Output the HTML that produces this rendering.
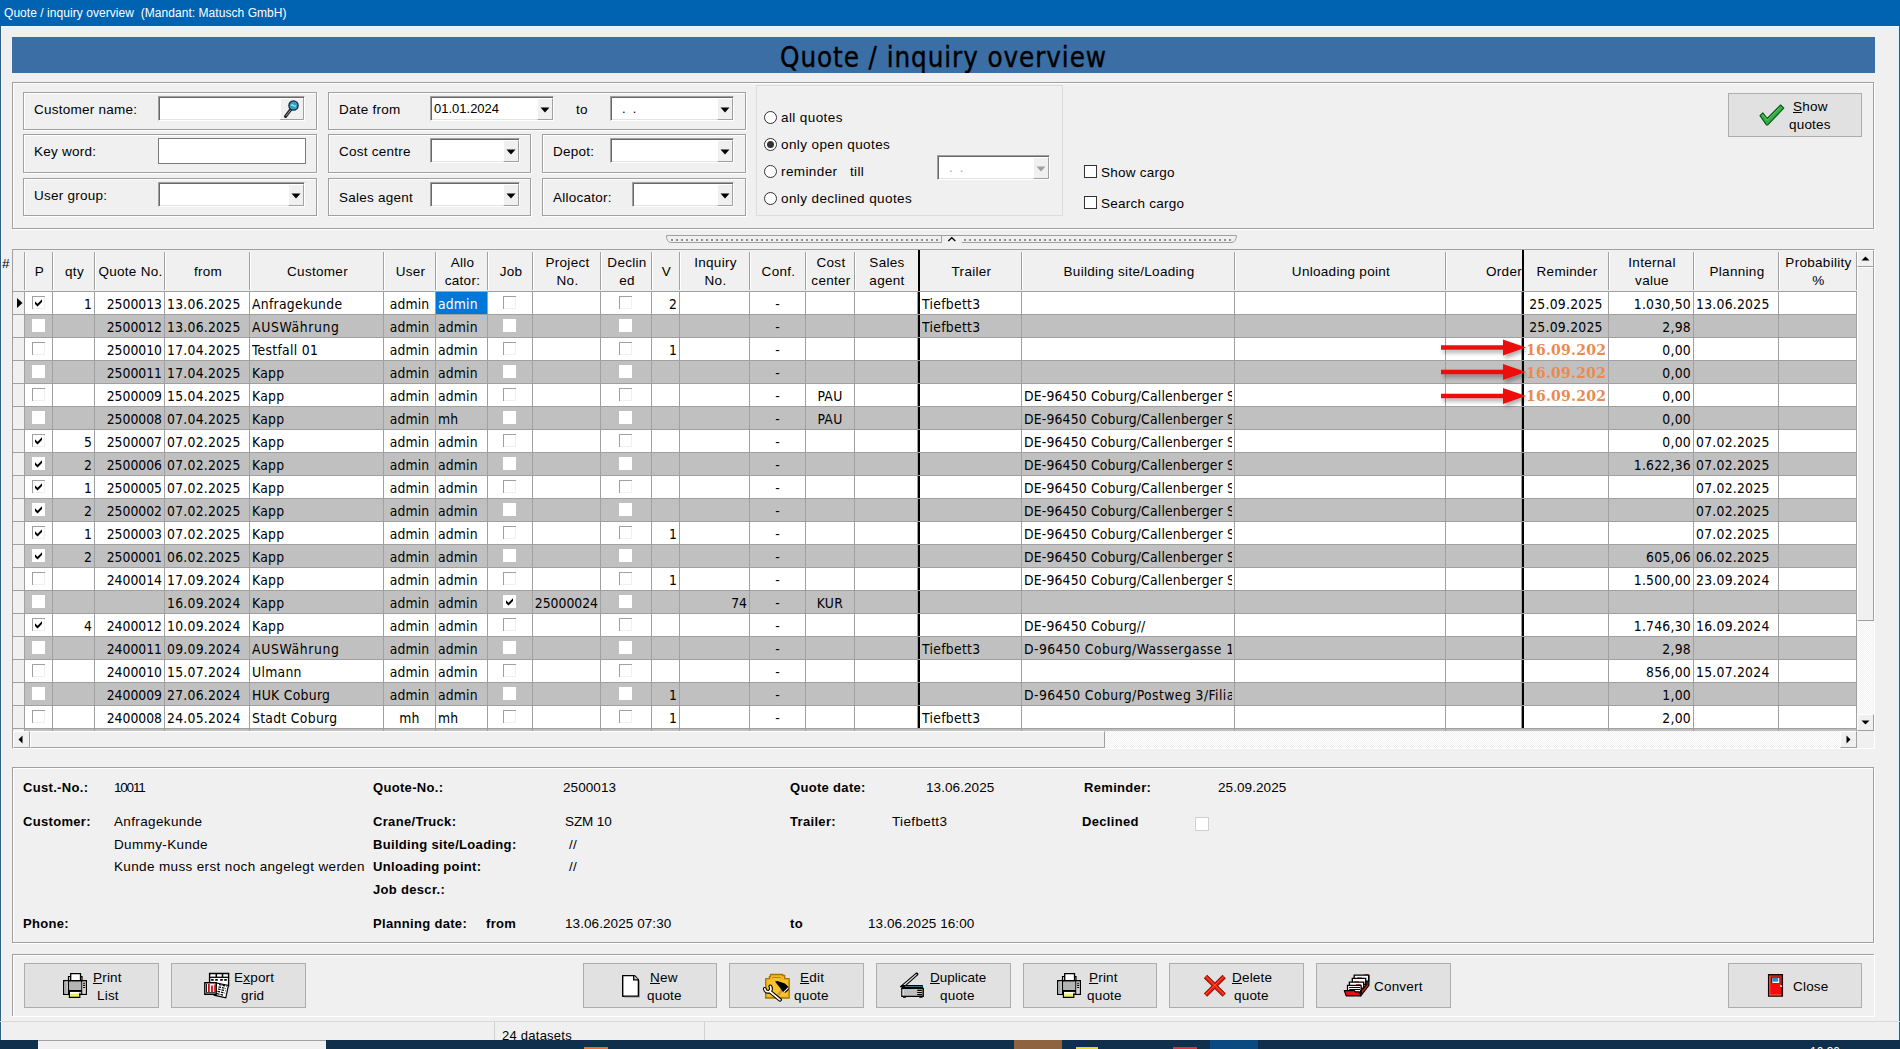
<!DOCTYPE html>
<html lang="en"><head><meta charset="utf-8"><title>Quote / inquiry overview</title>
<style>
html,body{margin:0;padding:0}
body{width:1900px;height:1049px;overflow:hidden;background:#f0f0f0;position:relative;font-family:"Liberation Sans",sans-serif;color:#000}
div,span,svg.a{position:absolute;box-sizing:content-box}
.t{white-space:pre;line-height:20px}
.lbl{font-size:13.5px;letter-spacing:.25px}
.b{font-size:13px;font-weight:bold;letter-spacing:.32px}
.val{font-size:13.5px;letter-spacing:.36px}
.hd{font-size:13.5px;letter-spacing:.3px;padding-left:1px}
.dt{font-family:"DejaVu Sans Condensed","Liberation Sans",sans-serif;font-size:13.8px;letter-spacing:.15px}
.btn{font-size:13.5px;letter-spacing:.2px}
.ttl{font-size:12px;color:#fff}
.big{font-family:"DejaVu Sans Condensed","Liberation Sans",sans-serif;font-size:27.5px;letter-spacing:.92px;-webkit-text-stroke:.35px #000}
.st{font-size:13px;letter-spacing:.25px}
.or{font-family:"DejaVu Serif","Liberation Serif",serif;font-weight:bold;font-size:14px;color:#ec8a4e;letter-spacing:.25px}
.et{border:1px solid #a0a0a0;box-shadow:inset 1px 1px 0 #fff,1px 1px 0 #fff}
.sk{border:1px solid;border-color:#a0a0a0 #fff #fff #a0a0a0;box-shadow:inset 1px 1px 0 #696969,inset -1px -1px 0 #e3e3e3;padding:1px}
.cb{background:#f0f0f0;border:1px solid;border-color:#fff #a0a0a0 #a0a0a0 #fff;box-shadow:none}
.pb{background:#e1e1e1;border:1px solid #adadad}
u{text-decoration:underline;text-underline-offset:1px}
</style></head><body>

<div style="left:0px;top:0px;width:1900px;height:26px;background:#0063b1"></div>
<span class="t ttl" style="left:4px;top:3px;letter-spacing:.05px;">Quote / inquiry overview  (Mandant: Matusch GmbH)</span>
<div style="left:0px;top:26px;width:1px;height:1014px;background:#2f5f80"></div>
<div style="left:1px;top:26px;width:1px;height:1014px;background:#e6fbff"></div>
<div style="left:1px;top:26px;width:1897px;height:1px;background:#e6fbff"></div>
<div style="left:1898px;top:26px;width:1px;height:1014px;background:#dff6ff"></div>
<div style="left:1899px;top:26px;width:1px;height:1014px;background:#2b5a80"></div>
<div style="left:12px;top:37px;width:1863px;height:36px;background:#3a6ea5;overflow:hidden"><span class="t big" style="left:0;width:1863px;text-align:center;top:10px">Quote / inquiry overview</span></div>
<div class="et" style="left:12px;top:82px;width:1860px;height:145px;"></div>
<div class="et" style="left:23px;top:92px;width:292px;height:36px;"></div>
<div class="et" style="left:23px;top:134px;width:292px;height:37px;"></div>
<div class="et" style="left:23px;top:178px;width:292px;height:36px;"></div>
<div class="et" style="left:328px;top:92px;width:416px;height:36px;"></div>
<div class="et" style="left:328px;top:134px;width:201px;height:37px;"></div>
<div class="et" style="left:328px;top:178px;width:201px;height:36px;"></div>
<div class="et" style="left:542px;top:134px;width:202px;height:37px;"></div>
<div class="et" style="left:542px;top:178px;width:202px;height:36px;"></div>
<span class="t lbl" style="left:34px;top:100px;">Customer name:</span>
<span class="t lbl" style="left:34px;top:142px;">Key word:</span>
<span class="t lbl" style="left:34px;top:186px;">User group:</span>
<span class="t lbl" style="left:339px;top:100px;">Date from</span>
<span class="t lbl" style="left:339px;top:142px;">Cost centre</span>
<span class="t lbl" style="left:339px;top:188px;">Sales agent</span>
<span class="t lbl" style="left:576px;top:100px;">to</span>
<span class="t lbl" style="left:553px;top:142px;">Depot:</span>
<span class="t lbl" style="left:553px;top:188px;">Allocator:</span>
<div class="sk" style="left:158px;top:96px;width:143px;height:21px;background:#fff;"><svg class="a" width="24" height="22" style="right:0;top:1px" viewBox="0 0 24 22"><rect x="0.5" y="0.5" width="23" height="21" fill="#f0f0f0" stroke="none"/><path d="M0 21.5H23.5V0" fill="none" stroke="#a0a0a0"/><path d="M0.5 21V0.5H23" fill="none" stroke="#fff"/><path d="M5.5 18.5L11.5 10.5" stroke="#222" stroke-width="3" stroke-linecap="round"/><path d="M6 18L11.5 10.8" stroke="#9a9a9a" stroke-width="1"/><circle cx="13.5" cy="7.5" r="4.6" fill="#2fa3c4" stroke="#123" stroke-width="1.3"/><path d="M11 7.5q1.2-1.6 2.5 0t2.5 0" fill="none" stroke="#bfefff" stroke-width="1.1"/></svg></div>
<div style="left:158px;top:138px;width:146px;height:24px;background:#fff;border:1px solid #7a7a7a"></div>
<div class="sk" style="left:158px;top:182px;width:143px;height:21px;background:#fff;"><div class="cb" style="right:0;top:1px;width:14px;height:20px"></div><svg class="a" width="16" height="23" style="right:0;top:0"><path d="M3.5 10.5h9l-4.5 5z" fill="#000"/></svg></div>
<div class="sk" style="left:430px;top:96px;width:120px;height:21px;background:#fff;"><span class="t" style="left:3px;top:1px;font-size:13px;color:#000;line-height:22px">01.01.2024</span><div class="cb" style="right:0;top:1px;width:14px;height:20px"></div><svg class="a" width="16" height="23" style="right:0;top:0"><path d="M3.5 10.5h9l-4.5 5z" fill="#000"/></svg></div>
<div class="sk" style="left:610px;top:96px;width:120px;height:21px;background:#fff;"><span class="t" style="left:11px;top:1px;font-size:13px;color:#000;line-height:22px">.  .</span><div class="cb" style="right:0;top:1px;width:14px;height:20px"></div><svg class="a" width="16" height="23" style="right:0;top:0"><path d="M3.5 10.5h9l-4.5 5z" fill="#000"/></svg></div>
<div class="sk" style="left:430px;top:138px;width:86px;height:21px;background:#fff;"><div class="cb" style="right:0;top:1px;width:14px;height:20px"></div><svg class="a" width="16" height="23" style="right:0;top:0"><path d="M3.5 10.5h9l-4.5 5z" fill="#000"/></svg></div>
<div class="sk" style="left:610px;top:138px;width:120px;height:21px;background:#fff;"><div class="cb" style="right:0;top:1px;width:14px;height:20px"></div><svg class="a" width="16" height="23" style="right:0;top:0"><path d="M3.5 10.5h9l-4.5 5z" fill="#000"/></svg></div>
<div class="sk" style="left:430px;top:182px;width:86px;height:21px;background:#fff;"><div class="cb" style="right:0;top:1px;width:14px;height:20px"></div><svg class="a" width="16" height="23" style="right:0;top:0"><path d="M3.5 10.5h9l-4.5 5z" fill="#000"/></svg></div>
<div class="sk" style="left:632px;top:182px;width:98px;height:21px;background:#fff;"><div class="cb" style="right:0;top:1px;width:14px;height:20px"></div><svg class="a" width="16" height="23" style="right:0;top:0"><path d="M3.5 10.5h9l-4.5 5z" fill="#000"/></svg></div>
<div style="left:756px;top:85px;width:305px;height:129px;border:1px solid #dcdcdc"></div>
<div style="left:764px;top:111px;width:11px;height:11px;border:1px solid #333;border-radius:50%;background:#fff"></div>
<span class="t lbl" style="left:781px;top:108px;letter-spacing:.4px;">all quotes</span>
<div style="left:764px;top:138px;width:11px;height:11px;border:1px solid #333;border-radius:50%;background:#fff"><div style="left:2px;top:2px;width:7px;height:7px;border-radius:50%;background:#333"></div></div>
<span class="t lbl" style="left:781px;top:135px;letter-spacing:.4px;">only open quotes</span>
<div style="left:764px;top:165px;width:11px;height:11px;border:1px solid #333;border-radius:50%;background:#fff"></div>
<span class="t lbl" style="left:781px;top:162px;letter-spacing:.4px;">reminder   till</span>
<div style="left:764px;top:192px;width:11px;height:11px;border:1px solid #333;border-radius:50%;background:#fff"></div>
<span class="t lbl" style="left:781px;top:189px;letter-spacing:.4px;">only declined quotes</span>
<div class="sk" style="left:937px;top:155px;width:109px;height:21px;background:#fff;"><span class="t" style="left:11px;top:1px;font-size:13px;color:#a0a0a0;line-height:22px">.  .</span><div class="cb" style="right:0;top:1px;width:14px;height:20px"></div><svg class="a" width="16" height="23" style="right:0;top:0"><path d="M3.5 10.5h9l-4.5 5z" fill="#a0a0a0"/></svg></div>
<div style="left:1084px;top:165px;width:11px;height:11px;border:1px solid #333;background:#fff"></div>
<span class="t lbl" style="left:1101px;top:163px;">Show cargo</span>
<div style="left:1084px;top:196px;width:11px;height:11px;border:1px solid #333;background:#fff"></div>
<span class="t lbl" style="left:1101px;top:194px;">Search cargo</span>
<div class="pb" style="left:1728px;top:93px;width:132px;height:42px;"></div>
<svg class="a" width="36" height="34" style="left:1754px;top:98px" viewBox="0 0 36 34"><path d="M6 17.600l2.800-2.800l4.400 5.700l13.400-13.500l3.200 3.200l-16 16.700h-1.400z" fill="#35ab46" stroke="#0b5a18" stroke-width="1.100" stroke-linejoin="round"/><path d="M8.600 16.600l4.600 5.600l13.400-13.500" fill="none" stroke="#5fd070" stroke-width=".9"/></svg>
<span class="t btn" style="left:1793px;top:97px;"><u>S</u>how</span>
<span class="t btn" style="left:1789px;top:115px;">quotes</span>
<svg class="a" width="572" height="10" style="left:666px;top:234px" viewBox="0 0 572 10"><path d="M275.5 1.5V8.5H4.5Q0.5 8 0.5 1.5H570.5Q570 8 566 8.5H295.5" fill="none" stroke="#a0a0a0"/><path d="M5 6H273M298 6H567" stroke="#8f8f8f" stroke-width="2" stroke-dasharray="2 3"/><path d="M282.300 7L285.800 3.700L289.300 7" fill="none" stroke="#000" stroke-width="1.300"/></svg>
<div style="left:12px;top:249px;width:1861px;height:498px;border:1px solid;border-color:#a0a0a0 #fff #fff #a0a0a0;background:#f0f0f0"></div>
<span class="t hd" style="left:1px;top:254px;">#</span>
<div style="left:25px;top:292px;width:1831px;height:436px;background:#fff"></div>
<div style="left:25px;top:315px;width:1831px;height:22px;background:#c0c0c0"></div>
<div style="left:25px;top:361px;width:1831px;height:22px;background:#c0c0c0"></div>
<div style="left:25px;top:407px;width:1831px;height:22px;background:#c0c0c0"></div>
<div style="left:25px;top:453px;width:1831px;height:22px;background:#c0c0c0"></div>
<div style="left:25px;top:499px;width:1831px;height:22px;background:#c0c0c0"></div>
<div style="left:25px;top:545px;width:1831px;height:22px;background:#c0c0c0"></div>
<div style="left:25px;top:591px;width:1831px;height:22px;background:#c0c0c0"></div>
<div style="left:25px;top:637px;width:1831px;height:22px;background:#c0c0c0"></div>
<div style="left:25px;top:683px;width:1831px;height:22px;background:#c0c0c0"></div>
<div style="left:436px;top:292px;width:51px;height:22px;background:#0078d7"></div>
<div style="left:24px;top:252px;width:1px;height:38px;background:#a0a0a0"></div>
<div style="left:25px;top:252px;width:1px;height:38px;background:#fff"></div>
<div style="left:24px;top:291px;width:1px;height:438px;background:#a0a0a0"></div>
<div style="left:52px;top:252px;width:1px;height:38px;background:#a0a0a0"></div>
<div style="left:53px;top:252px;width:1px;height:38px;background:#fff"></div>
<div style="left:52px;top:291px;width:1px;height:438px;background:#a0a0a0"></div>
<div style="left:94px;top:252px;width:1px;height:38px;background:#a0a0a0"></div>
<div style="left:95px;top:252px;width:1px;height:38px;background:#fff"></div>
<div style="left:94px;top:291px;width:1px;height:438px;background:#a0a0a0"></div>
<div style="left:164px;top:252px;width:1px;height:38px;background:#a0a0a0"></div>
<div style="left:165px;top:252px;width:1px;height:38px;background:#fff"></div>
<div style="left:164px;top:291px;width:1px;height:438px;background:#a0a0a0"></div>
<div style="left:249px;top:252px;width:1px;height:38px;background:#a0a0a0"></div>
<div style="left:250px;top:252px;width:1px;height:38px;background:#fff"></div>
<div style="left:249px;top:291px;width:1px;height:438px;background:#a0a0a0"></div>
<div style="left:383px;top:252px;width:1px;height:38px;background:#a0a0a0"></div>
<div style="left:384px;top:252px;width:1px;height:38px;background:#fff"></div>
<div style="left:383px;top:291px;width:1px;height:438px;background:#a0a0a0"></div>
<div style="left:435px;top:252px;width:1px;height:38px;background:#a0a0a0"></div>
<div style="left:436px;top:252px;width:1px;height:38px;background:#fff"></div>
<div style="left:435px;top:291px;width:1px;height:438px;background:#a0a0a0"></div>
<div style="left:487px;top:252px;width:1px;height:38px;background:#a0a0a0"></div>
<div style="left:488px;top:252px;width:1px;height:38px;background:#fff"></div>
<div style="left:487px;top:291px;width:1px;height:438px;background:#a0a0a0"></div>
<div style="left:532px;top:252px;width:1px;height:38px;background:#a0a0a0"></div>
<div style="left:533px;top:252px;width:1px;height:38px;background:#fff"></div>
<div style="left:532px;top:291px;width:1px;height:438px;background:#a0a0a0"></div>
<div style="left:600px;top:252px;width:1px;height:38px;background:#a0a0a0"></div>
<div style="left:601px;top:252px;width:1px;height:38px;background:#fff"></div>
<div style="left:600px;top:291px;width:1px;height:438px;background:#a0a0a0"></div>
<div style="left:651px;top:252px;width:1px;height:38px;background:#a0a0a0"></div>
<div style="left:652px;top:252px;width:1px;height:38px;background:#fff"></div>
<div style="left:651px;top:291px;width:1px;height:438px;background:#a0a0a0"></div>
<div style="left:679px;top:252px;width:1px;height:38px;background:#a0a0a0"></div>
<div style="left:680px;top:252px;width:1px;height:38px;background:#fff"></div>
<div style="left:679px;top:291px;width:1px;height:438px;background:#a0a0a0"></div>
<div style="left:749px;top:252px;width:1px;height:38px;background:#a0a0a0"></div>
<div style="left:750px;top:252px;width:1px;height:38px;background:#fff"></div>
<div style="left:749px;top:291px;width:1px;height:438px;background:#a0a0a0"></div>
<div style="left:805px;top:252px;width:1px;height:38px;background:#a0a0a0"></div>
<div style="left:806px;top:252px;width:1px;height:38px;background:#fff"></div>
<div style="left:805px;top:291px;width:1px;height:438px;background:#a0a0a0"></div>
<div style="left:854px;top:252px;width:1px;height:38px;background:#a0a0a0"></div>
<div style="left:855px;top:252px;width:1px;height:38px;background:#fff"></div>
<div style="left:854px;top:291px;width:1px;height:438px;background:#a0a0a0"></div>
<div style="left:1021px;top:252px;width:1px;height:38px;background:#a0a0a0"></div>
<div style="left:1022px;top:252px;width:1px;height:38px;background:#fff"></div>
<div style="left:1021px;top:291px;width:1px;height:438px;background:#a0a0a0"></div>
<div style="left:1234px;top:252px;width:1px;height:38px;background:#a0a0a0"></div>
<div style="left:1235px;top:252px;width:1px;height:38px;background:#fff"></div>
<div style="left:1234px;top:291px;width:1px;height:438px;background:#a0a0a0"></div>
<div style="left:1445px;top:252px;width:1px;height:38px;background:#a0a0a0"></div>
<div style="left:1446px;top:252px;width:1px;height:38px;background:#fff"></div>
<div style="left:1445px;top:291px;width:1px;height:438px;background:#a0a0a0"></div>
<div style="left:1608px;top:252px;width:1px;height:38px;background:#a0a0a0"></div>
<div style="left:1609px;top:252px;width:1px;height:38px;background:#fff"></div>
<div style="left:1608px;top:291px;width:1px;height:438px;background:#a0a0a0"></div>
<div style="left:1693px;top:252px;width:1px;height:38px;background:#a0a0a0"></div>
<div style="left:1694px;top:252px;width:1px;height:38px;background:#fff"></div>
<div style="left:1693px;top:291px;width:1px;height:438px;background:#a0a0a0"></div>
<div style="left:1778px;top:252px;width:1px;height:38px;background:#a0a0a0"></div>
<div style="left:1779px;top:252px;width:1px;height:38px;background:#fff"></div>
<div style="left:1778px;top:291px;width:1px;height:438px;background:#a0a0a0"></div>
<div style="left:1856px;top:252px;width:1px;height:38px;background:#a0a0a0"></div>
<div style="left:1856px;top:291px;width:1px;height:438px;background:#a0a0a0"></div>
<div style="left:1521px;top:291px;width:1px;height:438px;background:#a0a0a0"></div>
<div style="left:1522px;top:250px;width:2px;height:481px;background:#000"></div>
<div style="left:917px;top:291px;width:1px;height:438px;background:#a0a0a0"></div>
<div style="left:918px;top:250px;width:2px;height:481px;background:#000"></div>
<div style="left:13px;top:291px;width:1843px;height:1px;background:#a0a0a0"></div>
<div style="left:13px;top:314px;width:1843px;height:1px;background:#a0a0a0"></div>
<div style="left:13px;top:337px;width:1843px;height:1px;background:#a0a0a0"></div>
<div style="left:13px;top:360px;width:1843px;height:1px;background:#a0a0a0"></div>
<div style="left:13px;top:383px;width:1843px;height:1px;background:#a0a0a0"></div>
<div style="left:13px;top:406px;width:1843px;height:1px;background:#a0a0a0"></div>
<div style="left:13px;top:429px;width:1843px;height:1px;background:#a0a0a0"></div>
<div style="left:13px;top:452px;width:1843px;height:1px;background:#a0a0a0"></div>
<div style="left:13px;top:475px;width:1843px;height:1px;background:#a0a0a0"></div>
<div style="left:13px;top:498px;width:1843px;height:1px;background:#a0a0a0"></div>
<div style="left:13px;top:521px;width:1843px;height:1px;background:#a0a0a0"></div>
<div style="left:13px;top:544px;width:1843px;height:1px;background:#a0a0a0"></div>
<div style="left:13px;top:567px;width:1843px;height:1px;background:#a0a0a0"></div>
<div style="left:13px;top:590px;width:1843px;height:1px;background:#a0a0a0"></div>
<div style="left:13px;top:613px;width:1843px;height:1px;background:#a0a0a0"></div>
<div style="left:13px;top:636px;width:1843px;height:1px;background:#a0a0a0"></div>
<div style="left:13px;top:659px;width:1843px;height:1px;background:#a0a0a0"></div>
<div style="left:13px;top:682px;width:1843px;height:1px;background:#a0a0a0"></div>
<div style="left:13px;top:705px;width:1843px;height:1px;background:#a0a0a0"></div>
<div style="left:13px;top:728px;width:1843px;height:1px;background:#a0a0a0"></div>
<div style="left:1522px;top:250px;width:2px;height:41px;background:#000"></div>
<div style="left:918px;top:250px;width:2px;height:41px;background:#000"></div>
<span class="t hd" style="left:25px;top:262px;width:27px;text-align:center;overflow:hidden;">P</span>
<span class="t hd" style="left:53px;top:262px;width:41px;text-align:center;overflow:hidden;">qty</span>
<span class="t hd" style="left:95px;top:262px;width:69px;text-align:center;overflow:hidden;">Quote No.</span>
<span class="t hd" style="left:165px;top:262px;width:84px;text-align:center;overflow:hidden;">from</span>
<span class="t hd" style="left:250px;top:262px;width:133px;text-align:center;overflow:hidden;">Customer</span>
<span class="t hd" style="left:384px;top:262px;width:51px;text-align:center;overflow:hidden;">User</span>
<span class="t hd" style="left:436px;top:253px;width:51px;text-align:center;overflow:hidden;">Allo</span>
<span class="t hd" style="left:436px;top:271px;width:51px;text-align:center;overflow:hidden;">cator:</span>
<span class="t hd" style="left:488px;top:262px;width:44px;text-align:center;overflow:hidden;">Job</span>
<span class="t hd" style="left:533px;top:253px;width:67px;text-align:center;overflow:hidden;">Project</span>
<span class="t hd" style="left:533px;top:271px;width:67px;text-align:center;overflow:hidden;">No.</span>
<span class="t hd" style="left:601px;top:253px;width:50px;text-align:center;overflow:hidden;">Declin</span>
<span class="t hd" style="left:601px;top:271px;width:50px;text-align:center;overflow:hidden;">ed</span>
<span class="t hd" style="left:652px;top:262px;width:27px;text-align:center;overflow:hidden;">V</span>
<span class="t hd" style="left:680px;top:253px;width:69px;text-align:center;overflow:hidden;">Inquiry</span>
<span class="t hd" style="left:680px;top:271px;width:69px;text-align:center;overflow:hidden;">No.</span>
<span class="t hd" style="left:750px;top:262px;width:55px;text-align:center;overflow:hidden;">Conf.</span>
<span class="t hd" style="left:806px;top:253px;width:48px;text-align:center;overflow:hidden;">Cost</span>
<span class="t hd" style="left:806px;top:271px;width:48px;text-align:center;overflow:hidden;">center</span>
<span class="t hd" style="left:855px;top:253px;width:62px;text-align:center;overflow:hidden;">Sales</span>
<span class="t hd" style="left:855px;top:271px;width:62px;text-align:center;overflow:hidden;">agent</span>
<span class="t hd" style="left:920px;top:262px;width:101px;text-align:center;overflow:hidden;">Trailer</span>
<span class="t hd" style="left:1022px;top:262px;width:212px;text-align:center;overflow:hidden;">Building site/Loading</span>
<span class="t hd" style="left:1235px;top:262px;width:210px;text-align:center;overflow:hidden;">Unloading point</span>
<span class="t hd" style="left:1446px;top:262px;width:75px;text-align:right;overflow:hidden;">Order</span>
<span class="t hd" style="left:1524px;top:262px;width:84px;text-align:center;overflow:hidden;">Reminder</span>
<span class="t hd" style="left:1609px;top:253px;width:84px;text-align:center;overflow:hidden;">Internal</span>
<span class="t hd" style="left:1609px;top:271px;width:84px;text-align:center;overflow:hidden;">value</span>
<span class="t hd" style="left:1694px;top:262px;width:84px;text-align:center;overflow:hidden;">Planning</span>
<span class="t hd" style="left:1779px;top:253px;width:77px;text-align:center;overflow:hidden;">Probability</span>
<span class="t hd" style="left:1779px;top:271px;width:77px;text-align:center;overflow:hidden;">%</span>
<div style="left:32px;top:296px;width:12px;height:12px;background:#fff;border-top:1px solid #a0a0a0;border-left:1px solid #a0a0a0;box-shadow:inset -1px -1px 0 #f0f0f0"><svg class="a" width="8" height="8" style="left:2px;top:2px" viewBox="0 0 8 8"><path d="M0 2.2L2.5 4.7L7 0.2V3L2.5 7.5L0 5z" fill="#000"/></svg></div>
<div style="left:503px;top:296px;width:12px;height:12px;background:#fff;border-top:1px solid #a0a0a0;border-left:1px solid #a0a0a0;box-shadow:inset -1px -1px 0 #f0f0f0"></div>
<div style="left:619px;top:296px;width:12px;height:12px;background:#fff;border-top:1px solid #a0a0a0;border-left:1px solid #a0a0a0;box-shadow:inset -1px -1px 0 #f0f0f0"></div>
<span class="t dt" style="left:53px;top:294px;width:39px;text-align:right;letter-spacing:0;">1</span>
<span class="t dt" style="left:95px;top:294px;width:67px;text-align:right;letter-spacing:0;">2500013</span>
<span class="t dt" style="left:167px;top:294px;width:80px;overflow:hidden;letter-spacing:.25px;">13.06.2025</span>
<span class="t dt" style="left:252px;top:294px;width:129px;overflow:hidden;letter-spacing:.28px;">Anfragekunde</span>
<span class="t dt" style="left:384px;top:294px;width:51px;text-align:center;">admin</span>
<span class="t dt" style="left:438px;top:294px;width:47px;overflow:hidden;color:#fff;">admin</span>
<span class="t dt" style="left:652px;top:294px;width:25px;text-align:right;letter-spacing:0;">2</span>
<span class="t dt" style="left:750px;top:294px;width:55px;text-align:center;">-</span>
<span class="t dt" style="left:922px;top:294px;width:97px;overflow:hidden;letter-spacing:.3px;">Tiefbett3</span>
<span class="t dt" style="left:1524px;top:294px;width:84px;text-align:center;letter-spacing:.25px;">25.09.2025</span>
<span class="t dt" style="left:1609px;top:294px;width:82px;text-align:right;letter-spacing:.25px;">1.030,50</span>
<span class="t dt" style="left:1696px;top:294px;width:80px;overflow:hidden;letter-spacing:.25px;">13.06.2025</span>
<div style="left:32px;top:319px;width:13px;height:13px;background:#fff"></div>
<div style="left:503px;top:319px;width:13px;height:13px;background:#fff"></div>
<div style="left:619px;top:319px;width:13px;height:13px;background:#fff"></div>
<span class="t dt" style="left:95px;top:317px;width:67px;text-align:right;letter-spacing:0;">2500012</span>
<span class="t dt" style="left:167px;top:317px;width:80px;overflow:hidden;letter-spacing:.25px;">13.06.2025</span>
<span class="t dt" style="left:252px;top:317px;width:129px;overflow:hidden;letter-spacing:.65px;">AUSWährung</span>
<span class="t dt" style="left:384px;top:317px;width:51px;text-align:center;">admin</span>
<span class="t dt" style="left:438px;top:317px;width:47px;overflow:hidden;">admin</span>
<span class="t dt" style="left:750px;top:317px;width:55px;text-align:center;">-</span>
<span class="t dt" style="left:922px;top:317px;width:97px;overflow:hidden;letter-spacing:.3px;">Tiefbett3</span>
<span class="t dt" style="left:1524px;top:317px;width:84px;text-align:center;letter-spacing:.25px;">25.09.2025</span>
<span class="t dt" style="left:1609px;top:317px;width:82px;text-align:right;letter-spacing:.25px;">2,98</span>
<div style="left:32px;top:342px;width:12px;height:12px;background:#fff;border-top:1px solid #a0a0a0;border-left:1px solid #a0a0a0;box-shadow:inset -1px -1px 0 #f0f0f0"></div>
<div style="left:503px;top:342px;width:12px;height:12px;background:#fff;border-top:1px solid #a0a0a0;border-left:1px solid #a0a0a0;box-shadow:inset -1px -1px 0 #f0f0f0"></div>
<div style="left:619px;top:342px;width:12px;height:12px;background:#fff;border-top:1px solid #a0a0a0;border-left:1px solid #a0a0a0;box-shadow:inset -1px -1px 0 #f0f0f0"></div>
<span class="t dt" style="left:95px;top:340px;width:67px;text-align:right;letter-spacing:0;">2500010</span>
<span class="t dt" style="left:167px;top:340px;width:80px;overflow:hidden;letter-spacing:.25px;">17.04.2025</span>
<span class="t dt" style="left:252px;top:340px;width:129px;overflow:hidden;letter-spacing:.3px;">Testfall 01</span>
<span class="t dt" style="left:384px;top:340px;width:51px;text-align:center;">admin</span>
<span class="t dt" style="left:438px;top:340px;width:47px;overflow:hidden;">admin</span>
<span class="t dt" style="left:652px;top:340px;width:25px;text-align:right;letter-spacing:0;">1</span>
<span class="t dt" style="left:750px;top:340px;width:55px;text-align:center;">-</span>
<span class="t or" style="left:1526px;top:340px;width:82px;overflow:hidden;">16.09.202</span>
<span class="t dt" style="left:1609px;top:340px;width:82px;text-align:right;letter-spacing:.25px;">0,00</span>
<div style="left:32px;top:365px;width:13px;height:13px;background:#fff"></div>
<div style="left:503px;top:365px;width:13px;height:13px;background:#fff"></div>
<div style="left:619px;top:365px;width:13px;height:13px;background:#fff"></div>
<span class="t dt" style="left:95px;top:363px;width:67px;text-align:right;letter-spacing:0;">2500011</span>
<span class="t dt" style="left:167px;top:363px;width:80px;overflow:hidden;letter-spacing:.25px;">17.04.2025</span>
<span class="t dt" style="left:252px;top:363px;width:129px;overflow:hidden;letter-spacing:.3px;">Kapp</span>
<span class="t dt" style="left:384px;top:363px;width:51px;text-align:center;">admin</span>
<span class="t dt" style="left:438px;top:363px;width:47px;overflow:hidden;">admin</span>
<span class="t dt" style="left:750px;top:363px;width:55px;text-align:center;">-</span>
<span class="t or" style="left:1526px;top:363px;width:82px;overflow:hidden;">16.09.202</span>
<span class="t dt" style="left:1609px;top:363px;width:82px;text-align:right;letter-spacing:.25px;">0,00</span>
<div style="left:32px;top:388px;width:12px;height:12px;background:#fff;border-top:1px solid #a0a0a0;border-left:1px solid #a0a0a0;box-shadow:inset -1px -1px 0 #f0f0f0"></div>
<div style="left:503px;top:388px;width:12px;height:12px;background:#fff;border-top:1px solid #a0a0a0;border-left:1px solid #a0a0a0;box-shadow:inset -1px -1px 0 #f0f0f0"></div>
<div style="left:619px;top:388px;width:12px;height:12px;background:#fff;border-top:1px solid #a0a0a0;border-left:1px solid #a0a0a0;box-shadow:inset -1px -1px 0 #f0f0f0"></div>
<span class="t dt" style="left:95px;top:386px;width:67px;text-align:right;letter-spacing:0;">2500009</span>
<span class="t dt" style="left:167px;top:386px;width:80px;overflow:hidden;letter-spacing:.25px;">15.04.2025</span>
<span class="t dt" style="left:252px;top:386px;width:129px;overflow:hidden;letter-spacing:.3px;">Kapp</span>
<span class="t dt" style="left:384px;top:386px;width:51px;text-align:center;">admin</span>
<span class="t dt" style="left:438px;top:386px;width:47px;overflow:hidden;">admin</span>
<span class="t dt" style="left:750px;top:386px;width:55px;text-align:center;">-</span>
<span class="t dt" style="left:806px;top:386px;width:48px;text-align:center;letter-spacing:.3px;">PAU</span>
<span class="t dt" style="left:1024px;top:386px;width:208px;overflow:hidden;letter-spacing:.18px;">DE-96450 Coburg/Callenberger Str.</span>
<span class="t or" style="left:1526px;top:386px;width:82px;overflow:hidden;">16.09.202</span>
<span class="t dt" style="left:1609px;top:386px;width:82px;text-align:right;letter-spacing:.25px;">0,00</span>
<div style="left:32px;top:411px;width:13px;height:13px;background:#fff"></div>
<div style="left:503px;top:411px;width:13px;height:13px;background:#fff"></div>
<div style="left:619px;top:411px;width:13px;height:13px;background:#fff"></div>
<span class="t dt" style="left:95px;top:409px;width:67px;text-align:right;letter-spacing:0;">2500008</span>
<span class="t dt" style="left:167px;top:409px;width:80px;overflow:hidden;letter-spacing:.25px;">07.04.2025</span>
<span class="t dt" style="left:252px;top:409px;width:129px;overflow:hidden;letter-spacing:.3px;">Kapp</span>
<span class="t dt" style="left:384px;top:409px;width:51px;text-align:center;">admin</span>
<span class="t dt" style="left:438px;top:409px;width:47px;overflow:hidden;">mh</span>
<span class="t dt" style="left:750px;top:409px;width:55px;text-align:center;">-</span>
<span class="t dt" style="left:806px;top:409px;width:48px;text-align:center;letter-spacing:.3px;">PAU</span>
<span class="t dt" style="left:1024px;top:409px;width:208px;overflow:hidden;letter-spacing:.18px;">DE-96450 Coburg/Callenberger Str.</span>
<span class="t dt" style="left:1609px;top:409px;width:82px;text-align:right;letter-spacing:.25px;">0,00</span>
<div style="left:32px;top:434px;width:12px;height:12px;background:#fff;border-top:1px solid #a0a0a0;border-left:1px solid #a0a0a0;box-shadow:inset -1px -1px 0 #f0f0f0"><svg class="a" width="8" height="8" style="left:2px;top:2px" viewBox="0 0 8 8"><path d="M0 2.2L2.5 4.7L7 0.2V3L2.5 7.5L0 5z" fill="#000"/></svg></div>
<div style="left:503px;top:434px;width:12px;height:12px;background:#fff;border-top:1px solid #a0a0a0;border-left:1px solid #a0a0a0;box-shadow:inset -1px -1px 0 #f0f0f0"></div>
<div style="left:619px;top:434px;width:12px;height:12px;background:#fff;border-top:1px solid #a0a0a0;border-left:1px solid #a0a0a0;box-shadow:inset -1px -1px 0 #f0f0f0"></div>
<span class="t dt" style="left:53px;top:432px;width:39px;text-align:right;letter-spacing:0;">5</span>
<span class="t dt" style="left:95px;top:432px;width:67px;text-align:right;letter-spacing:0;">2500007</span>
<span class="t dt" style="left:167px;top:432px;width:80px;overflow:hidden;letter-spacing:.25px;">07.02.2025</span>
<span class="t dt" style="left:252px;top:432px;width:129px;overflow:hidden;letter-spacing:.3px;">Kapp</span>
<span class="t dt" style="left:384px;top:432px;width:51px;text-align:center;">admin</span>
<span class="t dt" style="left:438px;top:432px;width:47px;overflow:hidden;">admin</span>
<span class="t dt" style="left:750px;top:432px;width:55px;text-align:center;">-</span>
<span class="t dt" style="left:1024px;top:432px;width:208px;overflow:hidden;letter-spacing:.18px;">DE-96450 Coburg/Callenberger Str.</span>
<span class="t dt" style="left:1609px;top:432px;width:82px;text-align:right;letter-spacing:.25px;">0,00</span>
<span class="t dt" style="left:1696px;top:432px;width:80px;overflow:hidden;letter-spacing:.25px;">07.02.2025</span>
<div style="left:32px;top:457px;width:13px;height:13px;background:#fff"><svg class="a" width="8" height="8" style="left:3px;top:3px" viewBox="0 0 8 8"><path d="M0 2.2L2.5 4.7L7 0.2V3L2.5 7.5L0 5z" fill="#000"/></svg></div>
<div style="left:503px;top:457px;width:13px;height:13px;background:#fff"></div>
<div style="left:619px;top:457px;width:13px;height:13px;background:#fff"></div>
<span class="t dt" style="left:53px;top:455px;width:39px;text-align:right;letter-spacing:0;">2</span>
<span class="t dt" style="left:95px;top:455px;width:67px;text-align:right;letter-spacing:0;">2500006</span>
<span class="t dt" style="left:167px;top:455px;width:80px;overflow:hidden;letter-spacing:.25px;">07.02.2025</span>
<span class="t dt" style="left:252px;top:455px;width:129px;overflow:hidden;letter-spacing:.3px;">Kapp</span>
<span class="t dt" style="left:384px;top:455px;width:51px;text-align:center;">admin</span>
<span class="t dt" style="left:438px;top:455px;width:47px;overflow:hidden;">admin</span>
<span class="t dt" style="left:750px;top:455px;width:55px;text-align:center;">-</span>
<span class="t dt" style="left:1024px;top:455px;width:208px;overflow:hidden;letter-spacing:.18px;">DE-96450 Coburg/Callenberger Str.</span>
<span class="t dt" style="left:1609px;top:455px;width:82px;text-align:right;letter-spacing:.25px;">1.622,36</span>
<span class="t dt" style="left:1696px;top:455px;width:80px;overflow:hidden;letter-spacing:.25px;">07.02.2025</span>
<div style="left:32px;top:480px;width:12px;height:12px;background:#fff;border-top:1px solid #a0a0a0;border-left:1px solid #a0a0a0;box-shadow:inset -1px -1px 0 #f0f0f0"><svg class="a" width="8" height="8" style="left:2px;top:2px" viewBox="0 0 8 8"><path d="M0 2.2L2.5 4.7L7 0.2V3L2.5 7.5L0 5z" fill="#000"/></svg></div>
<div style="left:503px;top:480px;width:12px;height:12px;background:#fff;border-top:1px solid #a0a0a0;border-left:1px solid #a0a0a0;box-shadow:inset -1px -1px 0 #f0f0f0"></div>
<div style="left:619px;top:480px;width:12px;height:12px;background:#fff;border-top:1px solid #a0a0a0;border-left:1px solid #a0a0a0;box-shadow:inset -1px -1px 0 #f0f0f0"></div>
<span class="t dt" style="left:53px;top:478px;width:39px;text-align:right;letter-spacing:0;">1</span>
<span class="t dt" style="left:95px;top:478px;width:67px;text-align:right;letter-spacing:0;">2500005</span>
<span class="t dt" style="left:167px;top:478px;width:80px;overflow:hidden;letter-spacing:.25px;">07.02.2025</span>
<span class="t dt" style="left:252px;top:478px;width:129px;overflow:hidden;letter-spacing:.3px;">Kapp</span>
<span class="t dt" style="left:384px;top:478px;width:51px;text-align:center;">admin</span>
<span class="t dt" style="left:438px;top:478px;width:47px;overflow:hidden;">admin</span>
<span class="t dt" style="left:750px;top:478px;width:55px;text-align:center;">-</span>
<span class="t dt" style="left:1024px;top:478px;width:208px;overflow:hidden;letter-spacing:.18px;">DE-96450 Coburg/Callenberger Str.</span>
<span class="t dt" style="left:1696px;top:478px;width:80px;overflow:hidden;letter-spacing:.25px;">07.02.2025</span>
<div style="left:32px;top:503px;width:13px;height:13px;background:#fff"><svg class="a" width="8" height="8" style="left:3px;top:3px" viewBox="0 0 8 8"><path d="M0 2.2L2.5 4.7L7 0.2V3L2.5 7.5L0 5z" fill="#000"/></svg></div>
<div style="left:503px;top:503px;width:13px;height:13px;background:#fff"></div>
<div style="left:619px;top:503px;width:13px;height:13px;background:#fff"></div>
<span class="t dt" style="left:53px;top:501px;width:39px;text-align:right;letter-spacing:0;">2</span>
<span class="t dt" style="left:95px;top:501px;width:67px;text-align:right;letter-spacing:0;">2500002</span>
<span class="t dt" style="left:167px;top:501px;width:80px;overflow:hidden;letter-spacing:.25px;">07.02.2025</span>
<span class="t dt" style="left:252px;top:501px;width:129px;overflow:hidden;letter-spacing:.3px;">Kapp</span>
<span class="t dt" style="left:384px;top:501px;width:51px;text-align:center;">admin</span>
<span class="t dt" style="left:438px;top:501px;width:47px;overflow:hidden;">admin</span>
<span class="t dt" style="left:750px;top:501px;width:55px;text-align:center;">-</span>
<span class="t dt" style="left:1024px;top:501px;width:208px;overflow:hidden;letter-spacing:.18px;">DE-96450 Coburg/Callenberger Str.</span>
<span class="t dt" style="left:1696px;top:501px;width:80px;overflow:hidden;letter-spacing:.25px;">07.02.2025</span>
<div style="left:32px;top:526px;width:12px;height:12px;background:#fff;border-top:1px solid #a0a0a0;border-left:1px solid #a0a0a0;box-shadow:inset -1px -1px 0 #f0f0f0"><svg class="a" width="8" height="8" style="left:2px;top:2px" viewBox="0 0 8 8"><path d="M0 2.2L2.5 4.7L7 0.2V3L2.5 7.5L0 5z" fill="#000"/></svg></div>
<div style="left:503px;top:526px;width:12px;height:12px;background:#fff;border-top:1px solid #a0a0a0;border-left:1px solid #a0a0a0;box-shadow:inset -1px -1px 0 #f0f0f0"></div>
<div style="left:619px;top:526px;width:12px;height:12px;background:#fff;border-top:1px solid #a0a0a0;border-left:1px solid #a0a0a0;box-shadow:inset -1px -1px 0 #f0f0f0"></div>
<span class="t dt" style="left:53px;top:524px;width:39px;text-align:right;letter-spacing:0;">1</span>
<span class="t dt" style="left:95px;top:524px;width:67px;text-align:right;letter-spacing:0;">2500003</span>
<span class="t dt" style="left:167px;top:524px;width:80px;overflow:hidden;letter-spacing:.25px;">07.02.2025</span>
<span class="t dt" style="left:252px;top:524px;width:129px;overflow:hidden;letter-spacing:.3px;">Kapp</span>
<span class="t dt" style="left:384px;top:524px;width:51px;text-align:center;">admin</span>
<span class="t dt" style="left:438px;top:524px;width:47px;overflow:hidden;">admin</span>
<span class="t dt" style="left:652px;top:524px;width:25px;text-align:right;letter-spacing:0;">1</span>
<span class="t dt" style="left:750px;top:524px;width:55px;text-align:center;">-</span>
<span class="t dt" style="left:1024px;top:524px;width:208px;overflow:hidden;letter-spacing:.18px;">DE-96450 Coburg/Callenberger Str.</span>
<span class="t dt" style="left:1696px;top:524px;width:80px;overflow:hidden;letter-spacing:.25px;">07.02.2025</span>
<div style="left:32px;top:549px;width:13px;height:13px;background:#fff"><svg class="a" width="8" height="8" style="left:3px;top:3px" viewBox="0 0 8 8"><path d="M0 2.2L2.5 4.7L7 0.2V3L2.5 7.5L0 5z" fill="#000"/></svg></div>
<div style="left:503px;top:549px;width:13px;height:13px;background:#fff"></div>
<div style="left:619px;top:549px;width:13px;height:13px;background:#fff"></div>
<span class="t dt" style="left:53px;top:547px;width:39px;text-align:right;letter-spacing:0;">2</span>
<span class="t dt" style="left:95px;top:547px;width:67px;text-align:right;letter-spacing:0;">2500001</span>
<span class="t dt" style="left:167px;top:547px;width:80px;overflow:hidden;letter-spacing:.25px;">06.02.2025</span>
<span class="t dt" style="left:252px;top:547px;width:129px;overflow:hidden;letter-spacing:.3px;">Kapp</span>
<span class="t dt" style="left:384px;top:547px;width:51px;text-align:center;">admin</span>
<span class="t dt" style="left:438px;top:547px;width:47px;overflow:hidden;">admin</span>
<span class="t dt" style="left:750px;top:547px;width:55px;text-align:center;">-</span>
<span class="t dt" style="left:1024px;top:547px;width:208px;overflow:hidden;letter-spacing:.18px;">DE-96450 Coburg/Callenberger Str.</span>
<span class="t dt" style="left:1609px;top:547px;width:82px;text-align:right;letter-spacing:.25px;">605,06</span>
<span class="t dt" style="left:1696px;top:547px;width:80px;overflow:hidden;letter-spacing:.25px;">06.02.2025</span>
<div style="left:32px;top:572px;width:12px;height:12px;background:#fff;border-top:1px solid #a0a0a0;border-left:1px solid #a0a0a0;box-shadow:inset -1px -1px 0 #f0f0f0"></div>
<div style="left:503px;top:572px;width:12px;height:12px;background:#fff;border-top:1px solid #a0a0a0;border-left:1px solid #a0a0a0;box-shadow:inset -1px -1px 0 #f0f0f0"></div>
<div style="left:619px;top:572px;width:12px;height:12px;background:#fff;border-top:1px solid #a0a0a0;border-left:1px solid #a0a0a0;box-shadow:inset -1px -1px 0 #f0f0f0"></div>
<span class="t dt" style="left:95px;top:570px;width:67px;text-align:right;letter-spacing:0;">2400014</span>
<span class="t dt" style="left:167px;top:570px;width:80px;overflow:hidden;letter-spacing:.25px;">17.09.2024</span>
<span class="t dt" style="left:252px;top:570px;width:129px;overflow:hidden;letter-spacing:.3px;">Kapp</span>
<span class="t dt" style="left:384px;top:570px;width:51px;text-align:center;">admin</span>
<span class="t dt" style="left:438px;top:570px;width:47px;overflow:hidden;">admin</span>
<span class="t dt" style="left:652px;top:570px;width:25px;text-align:right;letter-spacing:0;">1</span>
<span class="t dt" style="left:750px;top:570px;width:55px;text-align:center;">-</span>
<span class="t dt" style="left:1024px;top:570px;width:208px;overflow:hidden;letter-spacing:.18px;">DE-96450 Coburg/Callenberger Str.</span>
<span class="t dt" style="left:1609px;top:570px;width:82px;text-align:right;letter-spacing:.25px;">1.500,00</span>
<span class="t dt" style="left:1696px;top:570px;width:80px;overflow:hidden;letter-spacing:.25px;">23.09.2024</span>
<div style="left:32px;top:595px;width:13px;height:13px;background:#fff"></div>
<div style="left:503px;top:595px;width:13px;height:13px;background:#fff"><svg class="a" width="8" height="8" style="left:3px;top:3px" viewBox="0 0 8 8"><path d="M0 2.2L2.5 4.7L7 0.2V3L2.5 7.5L0 5z" fill="#000"/></svg></div>
<div style="left:619px;top:595px;width:13px;height:13px;background:#fff"></div>
<span class="t dt" style="left:167px;top:593px;width:80px;overflow:hidden;letter-spacing:.25px;">16.09.2024</span>
<span class="t dt" style="left:252px;top:593px;width:129px;overflow:hidden;letter-spacing:.3px;">Kapp</span>
<span class="t dt" style="left:384px;top:593px;width:51px;text-align:center;">admin</span>
<span class="t dt" style="left:438px;top:593px;width:47px;overflow:hidden;">admin</span>
<span class="t dt" style="left:533px;top:593px;width:65px;text-align:right;letter-spacing:0;">25000024</span>
<span class="t dt" style="left:680px;top:593px;width:67px;text-align:right;letter-spacing:0;">74</span>
<span class="t dt" style="left:750px;top:593px;width:55px;text-align:center;">-</span>
<span class="t dt" style="left:806px;top:593px;width:48px;text-align:center;letter-spacing:.3px;">KUR</span>
<div style="left:32px;top:618px;width:12px;height:12px;background:#fff;border-top:1px solid #a0a0a0;border-left:1px solid #a0a0a0;box-shadow:inset -1px -1px 0 #f0f0f0"><svg class="a" width="8" height="8" style="left:2px;top:2px" viewBox="0 0 8 8"><path d="M0 2.2L2.5 4.7L7 0.2V3L2.5 7.5L0 5z" fill="#000"/></svg></div>
<div style="left:503px;top:618px;width:12px;height:12px;background:#fff;border-top:1px solid #a0a0a0;border-left:1px solid #a0a0a0;box-shadow:inset -1px -1px 0 #f0f0f0"></div>
<div style="left:619px;top:618px;width:12px;height:12px;background:#fff;border-top:1px solid #a0a0a0;border-left:1px solid #a0a0a0;box-shadow:inset -1px -1px 0 #f0f0f0"></div>
<span class="t dt" style="left:53px;top:616px;width:39px;text-align:right;letter-spacing:0;">4</span>
<span class="t dt" style="left:95px;top:616px;width:67px;text-align:right;letter-spacing:0;">2400012</span>
<span class="t dt" style="left:167px;top:616px;width:80px;overflow:hidden;letter-spacing:.25px;">10.09.2024</span>
<span class="t dt" style="left:252px;top:616px;width:129px;overflow:hidden;letter-spacing:.3px;">Kapp</span>
<span class="t dt" style="left:384px;top:616px;width:51px;text-align:center;">admin</span>
<span class="t dt" style="left:438px;top:616px;width:47px;overflow:hidden;">admin</span>
<span class="t dt" style="left:750px;top:616px;width:55px;text-align:center;">-</span>
<span class="t dt" style="left:1024px;top:616px;width:208px;overflow:hidden;letter-spacing:.18px;">DE-96450 Coburg//</span>
<span class="t dt" style="left:1609px;top:616px;width:82px;text-align:right;letter-spacing:.25px;">1.746,30</span>
<span class="t dt" style="left:1696px;top:616px;width:80px;overflow:hidden;letter-spacing:.25px;">16.09.2024</span>
<div style="left:32px;top:641px;width:13px;height:13px;background:#fff"></div>
<div style="left:503px;top:641px;width:13px;height:13px;background:#fff"></div>
<div style="left:619px;top:641px;width:13px;height:13px;background:#fff"></div>
<span class="t dt" style="left:95px;top:639px;width:67px;text-align:right;letter-spacing:0;">2400011</span>
<span class="t dt" style="left:167px;top:639px;width:80px;overflow:hidden;letter-spacing:.25px;">09.09.2024</span>
<span class="t dt" style="left:252px;top:639px;width:129px;overflow:hidden;letter-spacing:.65px;">AUSWährung</span>
<span class="t dt" style="left:384px;top:639px;width:51px;text-align:center;">admin</span>
<span class="t dt" style="left:438px;top:639px;width:47px;overflow:hidden;">admin</span>
<span class="t dt" style="left:750px;top:639px;width:55px;text-align:center;">-</span>
<span class="t dt" style="left:922px;top:639px;width:97px;overflow:hidden;letter-spacing:.3px;">Tiefbett3</span>
<span class="t dt" style="left:1024px;top:639px;width:208px;overflow:hidden;letter-spacing:.42px;">D-96450 Coburg/Wassergasse 12</span>
<span class="t dt" style="left:1609px;top:639px;width:82px;text-align:right;letter-spacing:.25px;">2,98</span>
<div style="left:32px;top:664px;width:12px;height:12px;background:#fff;border-top:1px solid #a0a0a0;border-left:1px solid #a0a0a0;box-shadow:inset -1px -1px 0 #f0f0f0"></div>
<div style="left:503px;top:664px;width:12px;height:12px;background:#fff;border-top:1px solid #a0a0a0;border-left:1px solid #a0a0a0;box-shadow:inset -1px -1px 0 #f0f0f0"></div>
<div style="left:619px;top:664px;width:12px;height:12px;background:#fff;border-top:1px solid #a0a0a0;border-left:1px solid #a0a0a0;box-shadow:inset -1px -1px 0 #f0f0f0"></div>
<span class="t dt" style="left:95px;top:662px;width:67px;text-align:right;letter-spacing:0;">2400010</span>
<span class="t dt" style="left:167px;top:662px;width:80px;overflow:hidden;letter-spacing:.25px;">15.07.2024</span>
<span class="t dt" style="left:252px;top:662px;width:129px;overflow:hidden;letter-spacing:.3px;">Ulmann</span>
<span class="t dt" style="left:384px;top:662px;width:51px;text-align:center;">admin</span>
<span class="t dt" style="left:438px;top:662px;width:47px;overflow:hidden;">admin</span>
<span class="t dt" style="left:750px;top:662px;width:55px;text-align:center;">-</span>
<span class="t dt" style="left:1609px;top:662px;width:82px;text-align:right;letter-spacing:.25px;">856,00</span>
<span class="t dt" style="left:1696px;top:662px;width:80px;overflow:hidden;letter-spacing:.25px;">15.07.2024</span>
<div style="left:32px;top:687px;width:13px;height:13px;background:#fff"></div>
<div style="left:503px;top:687px;width:13px;height:13px;background:#fff"></div>
<div style="left:619px;top:687px;width:13px;height:13px;background:#fff"></div>
<span class="t dt" style="left:95px;top:685px;width:67px;text-align:right;letter-spacing:0;">2400009</span>
<span class="t dt" style="left:167px;top:685px;width:80px;overflow:hidden;letter-spacing:.25px;">27.06.2024</span>
<span class="t dt" style="left:252px;top:685px;width:129px;overflow:hidden;letter-spacing:.3px;">HUK Coburg</span>
<span class="t dt" style="left:384px;top:685px;width:51px;text-align:center;">admin</span>
<span class="t dt" style="left:438px;top:685px;width:47px;overflow:hidden;">admin</span>
<span class="t dt" style="left:652px;top:685px;width:25px;text-align:right;letter-spacing:0;">1</span>
<span class="t dt" style="left:750px;top:685px;width:55px;text-align:center;">-</span>
<span class="t dt" style="left:1024px;top:685px;width:208px;overflow:hidden;letter-spacing:.42px;">D-96450 Coburg/Postweg 3/Filiale</span>
<span class="t dt" style="left:1609px;top:685px;width:82px;text-align:right;letter-spacing:.25px;">1,00</span>
<div style="left:32px;top:710px;width:12px;height:12px;background:#fff;border-top:1px solid #a0a0a0;border-left:1px solid #a0a0a0;box-shadow:inset -1px -1px 0 #f0f0f0"></div>
<div style="left:503px;top:710px;width:12px;height:12px;background:#fff;border-top:1px solid #a0a0a0;border-left:1px solid #a0a0a0;box-shadow:inset -1px -1px 0 #f0f0f0"></div>
<div style="left:619px;top:710px;width:12px;height:12px;background:#fff;border-top:1px solid #a0a0a0;border-left:1px solid #a0a0a0;box-shadow:inset -1px -1px 0 #f0f0f0"></div>
<span class="t dt" style="left:95px;top:708px;width:67px;text-align:right;letter-spacing:0;">2400008</span>
<span class="t dt" style="left:167px;top:708px;width:80px;overflow:hidden;letter-spacing:.25px;">24.05.2024</span>
<span class="t dt" style="left:252px;top:708px;width:129px;overflow:hidden;letter-spacing:.3px;">Stadt Coburg</span>
<span class="t dt" style="left:384px;top:708px;width:51px;text-align:center;">mh</span>
<span class="t dt" style="left:438px;top:708px;width:47px;overflow:hidden;">mh</span>
<span class="t dt" style="left:652px;top:708px;width:25px;text-align:right;letter-spacing:0;">1</span>
<span class="t dt" style="left:750px;top:708px;width:55px;text-align:center;">-</span>
<span class="t dt" style="left:922px;top:708px;width:97px;overflow:hidden;letter-spacing:.3px;">Tiefbett3</span>
<span class="t dt" style="left:1609px;top:708px;width:82px;text-align:right;letter-spacing:.25px;">2,00</span>
<svg class="a" width="6" height="10" style="left:17px;top:298px"><path d="M0 0L5.5 5L0 10z" fill="#000"/></svg>
<svg class="a" width="130" height="90" style="left:1420px;top:330px" viewBox="0 0 130 90"><defs><filter id="sh" x="-10%" y="-30%" width="120%" height="180%"><feGaussianBlur in="SourceAlpha" stdDeviation="2"/><feOffset dx="2" dy="3"/><feComponentTransfer><feFuncA type="linear" slope=".33"/></feComponentTransfer><feMerge><feMergeNode/><feMergeNode in="SourceGraphic"/></feMerge></filter></defs><g filter="url(#sh)"><g transform="translate(0,17.5)"><path d="M21 -2.2H83V-8L106 0L83 8V2.2H21z" fill="#ee1111"/></g><g transform="translate(0,42)"><path d="M21 -2.2H83V-8L106 0L83 8V2.2H21z" fill="#ee1111"/></g><g transform="translate(0,66)"><path d="M21 -2.2H83V-8L106 0L83 8V2.2H21z" fill="#ee1111"/></g></g></svg>
<div style="left:1857px;top:250px;width:17px;height:481px;background:repeating-conic-gradient(#fff 0 25%,#f0f0f0 0 50%) 0 0/2px 2px"></div>
<div class="cb" style="left:1857px;top:250px;width:15px;height:15px;"><svg class="a" width="15" height="15" style="left:0;top:0"><path d="M3.5 9.5h8l-4-4z" fill="#000"/></svg></div>
<div class="cb" style="left:1857px;top:267px;width:15px;height:352px;"></div>
<div class="cb" style="left:1857px;top:714px;width:15px;height:15px;"><svg class="a" width="15" height="15" style="left:0;top:0"><path d="M3.5 5.5h8l-4 4z" fill="#000"/></svg></div>
<div style="left:13px;top:729px;width:11px;height:2px;background:#f0f0f0"></div>
<div style="left:25px;top:729px;width:1831px;height:2px;background:#c0c0c0"></div>
<div style="left:24px;top:729px;width:1px;height:2px;background:#a0a0a0"></div>
<div style="left:52px;top:729px;width:1px;height:2px;background:#a0a0a0"></div>
<div style="left:94px;top:729px;width:1px;height:2px;background:#a0a0a0"></div>
<div style="left:164px;top:729px;width:1px;height:2px;background:#a0a0a0"></div>
<div style="left:249px;top:729px;width:1px;height:2px;background:#a0a0a0"></div>
<div style="left:383px;top:729px;width:1px;height:2px;background:#a0a0a0"></div>
<div style="left:435px;top:729px;width:1px;height:2px;background:#a0a0a0"></div>
<div style="left:487px;top:729px;width:1px;height:2px;background:#a0a0a0"></div>
<div style="left:532px;top:729px;width:1px;height:2px;background:#a0a0a0"></div>
<div style="left:600px;top:729px;width:1px;height:2px;background:#a0a0a0"></div>
<div style="left:651px;top:729px;width:1px;height:2px;background:#a0a0a0"></div>
<div style="left:679px;top:729px;width:1px;height:2px;background:#a0a0a0"></div>
<div style="left:749px;top:729px;width:1px;height:2px;background:#a0a0a0"></div>
<div style="left:805px;top:729px;width:1px;height:2px;background:#a0a0a0"></div>
<div style="left:854px;top:729px;width:1px;height:2px;background:#a0a0a0"></div>
<div style="left:1021px;top:729px;width:1px;height:2px;background:#a0a0a0"></div>
<div style="left:1234px;top:729px;width:1px;height:2px;background:#a0a0a0"></div>
<div style="left:1445px;top:729px;width:1px;height:2px;background:#a0a0a0"></div>
<div style="left:1608px;top:729px;width:1px;height:2px;background:#a0a0a0"></div>
<div style="left:1693px;top:729px;width:1px;height:2px;background:#a0a0a0"></div>
<div style="left:1778px;top:729px;width:1px;height:2px;background:#a0a0a0"></div>
<div style="left:1856px;top:729px;width:1px;height:2px;background:#a0a0a0"></div>
<div style="left:13px;top:731px;width:1844px;height:17px;background:repeating-conic-gradient(#fff 0 25%,#f0f0f0 0 50%) 0 0/2px 2px"></div>
<div class="cb" style="left:13px;top:731px;width:15px;height:15px;"><svg class="a" width="15" height="15" style="left:0;top:0"><path d="M8.500 3.500v8l-4-4z" fill="#000"/></svg></div>
<div class="cb" style="left:30px;top:731px;width:1073px;height:15px;"></div>
<div class="cb" style="left:1840px;top:731px;width:15px;height:15px;"><svg class="a" width="15" height="15" style="left:0;top:0"><path d="M5.500 3.500v8l4-4z" fill="#000"/></svg></div>
<div style="left:1857px;top:731px;width:17px;height:17px;background:#f0f0f0"></div>
<div class="et" style="left:12px;top:767px;width:1860px;height:174px;"></div>
<span class="t b" style="left:23px;top:778px;">Cust.-No.:</span>
<span class="t val" style="left:114px;top:778px;letter-spacing:-1.2px;">10011</span>
<span class="t b" style="left:23px;top:812px;">Customer:</span>
<span class="t val" style="left:114px;top:812px;">Anfragekunde</span>
<span class="t val" style="left:114px;top:835px;">Dummy-Kunde</span>
<span class="t val" style="left:114px;top:857px;">Kunde muss erst noch angelegt werden</span>
<span class="t b" style="left:23px;top:914px;">Phone:</span>
<span class="t b" style="left:373px;top:778px;">Quote-No.:</span>
<span class="t val" style="left:563px;top:778px;letter-spacing:.08px;">2500013</span>
<span class="t b" style="left:373px;top:812px;">Crane/Truck:</span>
<span class="t val" style="left:565px;top:812px;letter-spacing:-.1px;">SZM 10</span>
<span class="t b" style="left:373px;top:835px;">Building site/Loading:</span>
<span class="t val" style="left:569px;top:835px;">//</span>
<span class="t b" style="left:373px;top:857px;">Unloading point:</span>
<span class="t val" style="left:569px;top:857px;">//</span>
<span class="t b" style="left:373px;top:880px;">Job descr.:</span>
<span class="t b" style="left:373px;top:914px;">Planning date:</span>
<span class="t b" style="left:486px;top:914px;">from</span>
<span class="t val" style="left:565px;top:914px;letter-spacing:.08px;">13.06.2025 07:30</span>
<span class="t b" style="left:790px;top:778px;">Quote date:</span>
<span class="t val" style="left:926px;top:778px;letter-spacing:.08px;">13.06.2025</span>
<span class="t b" style="left:790px;top:812px;">Trailer:</span>
<span class="t val" style="left:892px;top:812px;">Tiefbett3</span>
<span class="t b" style="left:790px;top:914px;">to</span>
<span class="t val" style="left:868px;top:914px;letter-spacing:.08px;">13.06.2025 16:00</span>
<span class="t b" style="left:1084px;top:778px;">Reminder:</span>
<span class="t val" style="left:1218px;top:778px;letter-spacing:.08px;">25.09.2025</span>
<span class="t b" style="left:1082px;top:812px;">Declined</span>
<div style="left:1195px;top:817px;width:12px;height:12px;background:#fff;border:1px solid #d0d0d0"></div>
<div style="left:12px;top:954px;width:1861px;height:62px;border-top:1px solid #a0a0a0;border-left:1px solid #a0a0a0;box-shadow:inset 1px 1px 0 #fff"></div>
<div style="left:12px;top:1016px;width:1863px;height:1px;background:#fff"></div>
<div style="left:1874px;top:954px;width:1px;height:63px;background:#fff"></div>
<div class="pb" style="left:24px;top:963px;width:133px;height:43px;"></div>
<svg class="a" width="36" height="34" style="left:58px;top:968px" viewBox="0 0 36 34"><path d="M10.500 8.500h13.500v5h-13.500z" fill="#d8d8d8" stroke="#000" stroke-width="1.200"/><path d="M12.700 5.600h9.800v7.600h-9.800z" fill="#fff" stroke="#000" stroke-width="1.300"/><path d="M5.700 12.700h22.600v13.700h-22.600z" fill="#c4c4c4" stroke="#000" stroke-width="1.400"/><path d="M6.500 13.500h3.600v12.200h-3.600z" fill="#dfe3e3"/><path d="M7.600 14v11.500M9 14v11.500" stroke="#8a9090" stroke-width=".8"/><path d="M10.600 13v13M23.800 13v13" stroke="#000" stroke-width="1.200"/><path d="M11.300 14h11.800v7.800h-11.800z" fill="#b4b4b4"/><path d="M24.500 13.500h3.200v12.200h-3.200z" fill="#d4d4d4"/><path d="M25.100 15.300h2M25.100 17.400h2M25.100 19.500h2" stroke="#000" stroke-width="1.100"/><path d="M10.600 22h13.200v1.900h-13.200z" fill="#000"/><path d="M12 24h9.200v5h-9.200z" fill="#f1f060"/><path d="M12 24h9.200v1.600h-9.200z" fill="#fff"/><path d="M11.400 23.500v5.900h10.400v-4" fill="none" stroke="#000" stroke-width="1.200"/></svg>
<span class="t btn" style="left:93px;top:968px;"><u>P</u>rint</span>
<span class="t btn" style="left:97px;top:986px;">List</span>
<div class="pb" style="left:171px;top:963px;width:133px;height:43px;"></div>
<svg class="a" width="36" height="34" style="left:198px;top:968px" viewBox="0 0 36 34"><path d="M11.600 5.500h19v12.400h-19z" fill="#fff" stroke="#000" stroke-width="1.400"/><path d="M11.600 9.300h19" stroke="#000" stroke-width="1.300"/><path d="M18.300 5.500v3.800M24.500 5.500v3.800" stroke="#000" stroke-width="1.500"/><path d="M13.100 11.900h2.600M17.200 11.900h2.600M22.200 11.900h2.600M26.200 11.900h2.600" stroke="#000" stroke-width="1.900"/><path d="M18.600 15l11.800 2.400l-2.600 12.400l-11.600-2.600z" fill="#fff" stroke="#000" stroke-width="1.200"/><path d="M21 16.500l7.500 1.800M20.500 18.800l7.500 1.800M20 21l7.500 1.800M19.500 23.300l7.500 1.800M19 25.600l7 1.700" stroke="#000" stroke-width="1.200" stroke-dasharray="2.600 1"/><path d="M6.800 14.700h11.400v11.600h-11.400z" fill="#fff" stroke="#000" stroke-width="1.400"/><path d="M8.500 16v8.700h9" fill="none" stroke="#000" stroke-width=".9"/><path d="M10.900 16v8M14 17.600v6.400M17.100 16.600v7.400" stroke="#d41010" stroke-width="1.800"/></svg>
<span class="t btn" style="left:234px;top:968px;">E<u>x</u>port</span>
<span class="t btn" style="left:241px;top:986px;">grid</span>
<div class="pb" style="left:583px;top:963px;width:132px;height:43px;"></div>
<svg class="a" width="36" height="34" style="left:614px;top:968px" viewBox="0 0 36 34"><path d="M8.700 7.600h11.900l3.800 4.200v16.400h-15.700z" fill="#fff" stroke="#000" stroke-width="1.400" stroke-linejoin="round"/><path d="M19.700 7.600v4.200h4.700" fill="#d8d8d8" stroke="#000" stroke-width="1.300"/><path d="M25.500 12.500v16.600h-15" fill="none" stroke="#8c8c8c" stroke-width=".8"/></svg>
<span class="t btn" style="left:650px;top:968px;"><u>N</u>ew</span>
<span class="t btn" style="left:647px;top:986px;">quote</span>
<div class="pb" style="left:729px;top:963px;width:133px;height:43px;"></div>
<svg class="a" width="36" height="34" style="left:758px;top:968px" viewBox="0 0 36 34"><path d="M7.700 10.700h3.700v-2.200h1.100v-2h12.200v1h2v3.200h4.500v19.300h-23.500z" fill="#f6b81e" stroke="#a67600" stroke-width="1.300" stroke-linejoin="round"/><path d="M9.500 12.500h19.800v15.500h-19.800z" fill="#f9c632" opacity=".7"/><path d="M14.400 9.800h8.300" stroke="#a67600" stroke-width="1.200"/><path d="M14.800 10.700h7.500" stroke="#ffe060" stroke-width=".8"/><path d="M20 27l4.800-5.600" stroke="#c49a4a" stroke-width="2.400"/><path d="M17 13.400l2.400-.5l7.600 2.700l3.900 4l-.3 2.500l-3 2.700l-2.600-.7l-2.500-3.500z" fill="#000"/><path d="M30.400 19.700l-4.800 4.600" stroke="#fff" stroke-width="1.100"/><path d="M6.800 20.800q.6 3.600 4.400 2.800q3-1.800 1.100-5.200M12.500 24l9.500 7.800" fill="none" stroke="#000" stroke-width="3.800" stroke-linecap="round"/><path d="M6.800 20.800q.6 3.600 4.400 2.800q3-1.800 1.100-5.200M12.500 24l9.500 7.800" fill="none" stroke="#fff" stroke-width="1.700" stroke-linecap="round"/></svg>
<span class="t btn" style="left:800px;top:968px;"><u>E</u>dit</span>
<span class="t btn" style="left:794px;top:986px;">quote</span>
<div class="pb" style="left:876px;top:963px;width:133px;height:43px;"></div>
<svg class="a" width="36" height="34" style="left:894px;top:968px" viewBox="0 0 36 34"><path d="M6.500 18.600L22.300 5.200l1.500 1.400L10.600 18.300z" fill="#e0e0e0" stroke="#000" stroke-width="1.100" stroke-linejoin="round"/><path d="M21.600 4.600l2.800.4l-.6 2.600z" fill="#000"/><path d="M7.500 17h21.300v3.600h-21.300z" fill="#000"/><path d="M11 18.500h17" stroke="#3a7098" stroke-width="1"/><path d="M7.900 20.400h21.300v8h-21.300z" fill="#c0c0c0" stroke="#000" stroke-width="1.400"/><path d="M9 21.400v6" stroke="#f4f4f4" stroke-width="1"/><path d="M23.200 22.400h4.700M23.200 24.500h4.700M23.200 26.600h4.700" stroke="#000" stroke-width="1.100"/><path d="M9 28.600h3v1.200h-3zM25.300 28.600h3.200v1.200h-3.200z" fill="#000"/></svg>
<span class="t btn" style="left:930px;top:968px;letter-spacing:0;"><u>D</u>uplicate</span>
<span class="t btn" style="left:940px;top:986px;">quote</span>
<div class="pb" style="left:1023px;top:963px;width:132px;height:43px;"></div>
<svg class="a" width="36" height="34" style="left:1052px;top:968px" viewBox="0 0 36 34"><path d="M10.500 8.500h13.500v5h-13.500z" fill="#d8d8d8" stroke="#000" stroke-width="1.200"/><path d="M12.700 5.600h9.800v7.600h-9.800z" fill="#fff" stroke="#000" stroke-width="1.300"/><path d="M5.700 12.700h22.600v13.700h-22.600z" fill="#c4c4c4" stroke="#000" stroke-width="1.400"/><path d="M6.500 13.500h3.600v12.200h-3.600z" fill="#dfe3e3"/><path d="M7.600 14v11.500M9 14v11.500" stroke="#8a9090" stroke-width=".8"/><path d="M10.600 13v13M23.800 13v13" stroke="#000" stroke-width="1.200"/><path d="M11.300 14h11.800v7.800h-11.800z" fill="#b4b4b4"/><path d="M24.500 13.500h3.200v12.200h-3.200z" fill="#d4d4d4"/><path d="M25.100 15.300h2M25.100 17.400h2M25.100 19.500h2" stroke="#000" stroke-width="1.100"/><path d="M10.600 22h13.200v1.900h-13.200z" fill="#000"/><path d="M12 24h9.200v5h-9.200z" fill="#f1f060"/><path d="M12 24h9.200v1.600h-9.200z" fill="#fff"/><path d="M11.400 23.500v5.900h10.400v-4" fill="none" stroke="#000" stroke-width="1.200"/></svg>
<span class="t btn" style="left:1089px;top:968px;"><u>P</u>rint</span>
<span class="t btn" style="left:1087px;top:986px;">quote</span>
<div class="pb" style="left:1169px;top:963px;width:133px;height:43px;"></div>
<svg class="a" width="36" height="34" style="left:1196px;top:968px" viewBox="0 0 36 34"><path d="M9.500 8.500L28.200 27.200M28.200 8.500L9.500 27.200" stroke="#7c0c00" stroke-width="4.600"/><path d="M9.800 8.800L27.900 26.900M27.900 8.800L9.800 26.900" stroke="#ee1c0c" stroke-width="3"/><path d="M10 8.400L28 26.400M27.600 8.400L9.600 26.400" stroke="#ff5a3a" stroke-width=".9"/></svg>
<span class="t btn" style="left:1232px;top:968px;"><u>D</u>elete</span>
<span class="t btn" style="left:1234px;top:986px;">quote</span>
<div class="pb" style="left:1316px;top:963px;width:133px;height:43px;"></div>
<svg class="a" width="36" height="34" style="left:1338px;top:968px" viewBox="0 0 36 34"><path d="M22.700 27.900l8.200-10.400v-10.300l-2 1.500v7.500l-6.200 7z" fill="#cc2020" stroke="#000" stroke-width="1.200" stroke-linejoin="round"/><path d="M26.200 6.100h4v1.200h-4z" fill="#d82010"/><path d="M16.200 7.200h14.400v6h-14.400z" fill="#fff" stroke="#000" stroke-width="1.300"/><path d="M19.200 9.300h4.800v1h-4.800z" fill="#c03030"/><path d="M14.300 10.300h13.400v6h-13.400z" fill="#fff" stroke="#000" stroke-width="1.300"/><path d="M16.300 13.200h4.500v1h-4.500z" fill="#c03030"/><path d="M11.400 14.100h14.300v6h-14.300z" fill="#fff" stroke="#000" stroke-width="1.300"/><path d="M18.200 16.100h4.500v1.100h-4.500z" fill="#d82010"/><path d="M9.500 17.300h13.600v7h-13.600z" fill="#fff" stroke="#000" stroke-width="1.300"/><path d="M11.200 19.500h10.800M11.200 21.500h10.800" stroke="#000" stroke-width="1.100"/><path d="M6.300 22.600h10.300l.5 1.300h3.900l.7 1.500v-.5l1-2.200v5.200h-14.500z" fill="#e21212" stroke="#000" stroke-width="1.200" stroke-linejoin="round"/></svg>
<span class="t btn" style="left:1374px;top:977px;">Convert</span>
<div class="pb" style="left:1728px;top:963px;width:132px;height:43px;"></div>
<svg class="a" width="36" height="34" style="left:1758px;top:968px" viewBox="0 0 36 34"><path d="M10.700 6.700h13.600v21.400h-13.600z" fill="#f80a0a" stroke="#1a0000" stroke-width="1.500"/><path d="M11.500 7.500h12v7.800h-12z" fill="#b82424"/><path d="M11.800 7.600v20" stroke="#ff7446" stroke-width=".9"/><path d="M11.500 27h12" stroke="#ff7446" stroke-width=".9"/><path d="M13 9.300h9v5.900h-9z" fill="#6a1010"/><path d="M14.300 9.900h7v5.100h-7z" fill="#fff"/><path d="M14.300 9.900h5.900v3.800h-5.900z" fill="#1a98c8"/><path d="M22.200 17.400l1.600 1.400" stroke="#fff" stroke-width="1.500"/></svg>
<span class="t btn" style="left:1793px;top:977px;">Close</span>
<div style="left:0px;top:1021px;width:1900px;height:1px;background:#d9d9d9"></div>
<div style="left:494px;top:1022px;width:1px;height:18px;background:#d0d0d0"></div>
<div style="left:704px;top:1022px;width:1px;height:18px;background:#d0d0d0"></div>
<span class="t st" style="left:502px;top:1026px;">24 datasets</span>
<div style="left:0px;top:1040px;width:1900px;height:9px;background:#0f2f4c"></div>
<div style="left:38px;top:1040px;width:288px;height:9px;background:#f0f0f0;border-top:1px solid #a0a0a0;height:8px"></div>
<div style="left:1014px;top:1040px;width:48px;height:9px;background:#8e6340"></div>
<div style="left:1210px;top:1040px;width:48px;height:9px;background:#0a4a80"></div>
<div style="left:584px;top:1047px;width:24px;height:2px;background:#e8702a"></div>
<div style="left:1076px;top:1047px;width:22px;height:2px;background:#e8d820"></div>
<div style="left:1173px;top:1047px;width:24px;height:2px;background:#e03040"></div>
<span class="t" style="left:1810px;top:1042px;font-size:12px;color:#fff">10:30</span>
</body></html>
